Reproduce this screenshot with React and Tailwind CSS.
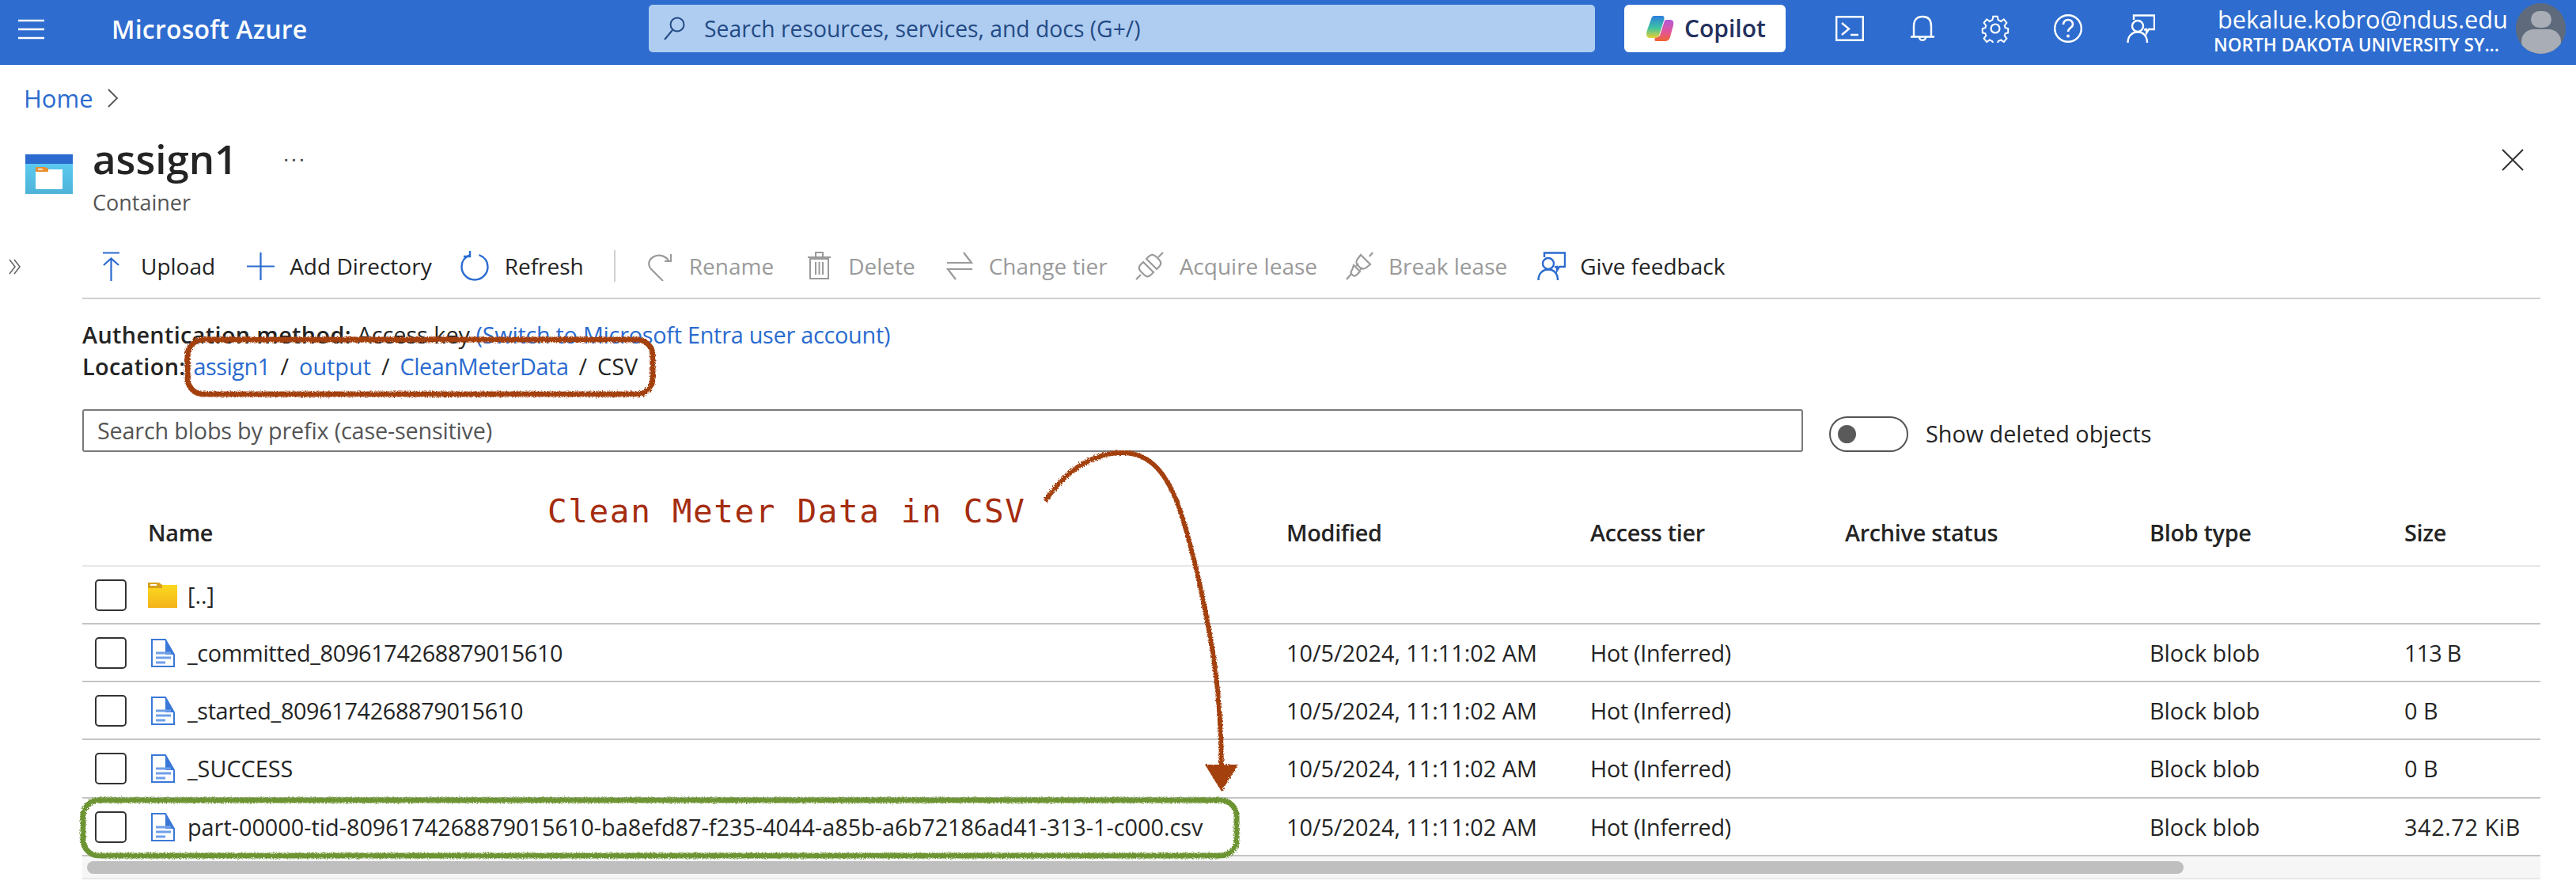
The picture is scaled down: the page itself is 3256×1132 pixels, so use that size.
import React from "react";

const Svg = ({ w, h, vb, children, cls = "" }) => (
  <svg width={w} height={h} viewBox={vb || `0 0 ${w} ${h}`} fill="none" className={`shrink-0 ${cls}`}>{children}</svg>
);

const Feedback = ({ c }) => (
  <Svg w={36} h={36}>
    <path d="M9 7V1.500h26V19h-7l-3 5v-5l-3 .5" stroke={c} strokeWidth="2.400" />
    <circle cx="14" cy="15" r="7" stroke={c} strokeWidth="2.400" />
    <path d="M1.500 36c0-8 5-13.500 12.500-13.500S26 28 26 36" stroke={c} strokeWidth="2.400" />
  </Svg>
);

const Plug = ({ flip }) => (
  <Svg w={36} h={36}>
    {flip ? (
      <g stroke="#9a9a9a" strokeWidth="2.200">
        <path d="M20 4l12 12-5 4a6 6 0 0 1-8 0l-3-3a6 6 0 0 1 0-8z" />
        <path d="M31 6l4-5" />
        <path d="M11 17l8 8-4 4c-2 2-4 2-6 0-2-2-2-4 0-6z" />
        <path d="M8 28l-6 7M14 18l3-3M19 23l3-3" />
      </g>
    ) : (
      <g stroke="#9a9a9a" strokeWidth="2.200">
        <path d="M14 9l13 13 3-3c3-3 3-6 0-9l-4-4c-3-3-6-3-9 0z" />
        <path d="M10 13l13 13-3 3c-3 3-6 3-9 0l-4-4c-3-3-3-6 0-9z" />
        <path d="M29 7l6-6M7 29l-6 6" />
      </g>
    )}
  </Svg>
);

const FileIcon = () => (
  <Svg w={30} h={36}>
    <path d="M1 1h17l11 19v15H1z" fill="#fff" stroke="#3a78d8" strokeWidth="2" />
    <path d="M18 1l11 19H18z" fill="#3a78d8" />
    <path d="M6 18h19M6 24h19M6 30h12" stroke="#6f9fe8" strokeWidth="3" />
  </Svg>
);

const Folder = () => (
  <Svg w={37} h={32}>
    <defs>
      <linearGradient id="fold" x1="0" y1="0" x2="0" y2="1">
        <stop offset="0" stopColor="#fbd91f" />
        <stop offset="1" stopColor="#f4b31a" />
      </linearGradient>
    </defs>
    <path d="M0 3h37v29H0z" fill="url(#fold)" />
    <path d="M0 0h14l4 3v4H0z" fill="#d7a11f" />
    <path d="M3 2h8v2H3z" fill="#fff" />
  </Svg>
);

const rows = [
  { name: "_committed_8096174268879015610", size: "113 B", h: "h-[73px]", nt: "tracking-[-0.33px]", st: "tracking-[-0.8px]" },
  { name: "_started_8096174268879015610", size: "0 B", h: "h-[73px]", nt: "tracking-[-0.35px]", st: "" },
  { name: "_SUCCESS", size: "0 B", h: "h-[74px]", nt: "", st: "" },
  { name: "part-00000-tid-8096174268879015610-ba8efd87-f235-4044-a85b-a6b72186ad41-313-1-c000.csv", size: "342.72 KiB", h: "h-[73px]", nt: "", st: "tracking-[0.6px]" },
];

const grid = "grid grid-cols-[83px_1439px_384px_322px_385px_322px_172px] items-center";

const Check = () => <div className="ml-4 w-10 h-10 rounded-[5px] border-2 border-[#333]" />;

const Tool = ({ icon, label, off, ml, gap }) => (
  <div className={`flex items-center ${ml} ${gap}`}>
    {icon}
    <span className={off ? "text-[#9a9a9a]" : "text-[#242424]"}>{label}</span>
  </div>
);

export default function App() {
  const D = "#9a9a9a";
  const B = "#2b6bcf";
  return (
    <div className="relative w-[3256px] h-[1132px] overflow-hidden bg-white font-['Open_Sans',sans-serif] text-[28.8px] leading-[40px] text-[#242424]">
      {/* top bar */}
      <header className="flex items-start h-[82px] bg-[#2e6dcf] text-white">
        <div className="flex items-center h-[74px] pl-[23px] w-[141px]">
          <Svg w={33} h={26}>
            <path d="M0 2h33M0 13h33M0 24h33" stroke="#fff" strokeWidth="2.400" />
          </Svg>
        </div>
        <div className="w-[679px] h-[74px] flex items-center text-[32px] font-semibold tracking-[0.2px]">Microsoft Azure</div>
        <div className="mt-[6px] w-[1196px] h-[60px] rounded-[5px] bg-[#afcdf0] flex items-center pl-[19px] gap-[24px] text-[#234a86] text-[28.300px]">
          <Svg w={27} h={30}>
            <circle cx="17" cy="10" r="8.500" stroke="#234a86" strokeWidth="2" />
            <path d="M11 17L1 29" stroke="#234a86" strokeWidth="2" />
          </Svg>
          Search resources, services, and docs (G+/)
        </div>
        <div className="ml-[37px] mt-[6px] w-[204px] h-[60px] rounded-[6px] bg-white flex items-center pl-[28px] gap-[13px] text-[#24305e] text-[30px] font-semibold">
          <Svg w={35} h={32}>
            <defs>
              <linearGradient id="cpA" x1="0" y1="0" x2="0" y2="1">
                <stop offset="0" stopColor="#2b7fe0" />
                <stop offset="0.55" stopColor="#3fc3a0" />
                <stop offset="1" stopColor="#e7d12f" />
              </linearGradient>
              <linearGradient id="cpB" x1="0" y1="0" x2="0" y2="1">
                <stop offset="0" stopColor="#b45bd8" />
                <stop offset="0.55" stopColor="#e0559a" />
                <stop offset="1" stopColor="#f0662f" />
              </linearGradient>
            </defs>
            <path d="M10 0h10c3 0 3 3 2 6l-6 19c-1 2-3 3-6 3H5C0 28-1 24 1 18L6 4c1-3 2-4 4-4z" fill="url(#cpA)" />
            <path d="M25 5h5c4 0 5 3 4 7l-4 15c-1 3-3 5-7 5H13c-3 0-3-2-2-4 4-1 6-2 7-6l4-13c1-3 1-4 3-4z" fill="url(#cpB)" />
          </Svg>
          Copilot
        </div>
        <div className="ml-[63px] flex items-center h-[72px] gap-[56px]">
          <Svg w={36} h={32}>
            <path d="M1.200 1.200h33.600v29.600H1.200z" stroke="#fff" strokeWidth="2.400" />
            <path d="M8 9l9 7.500-9 7.500M19 24h10" stroke="#fff" strokeWidth="2.400" />
          </Svg>
          <Svg w={36} h={34}>
            <path d="M7 27V14C7 6 11 2 18 2s11 4 11 12v13M3 27.500h30M14 28c0 5 8 5 8 0" stroke="#fff" strokeWidth="2.400" />
          </Svg>
          <Svg w={36} h={36}>
            <circle cx="18" cy="18" r="5.500" stroke="#fff" strokeWidth="2.200" />
            <path d="M15 1h6l1 5 4 2 4-3 4 5-3 4 1 3 4 1v6l-4 1-1 3 3 4-4 5-4-3-4 2-1 4h-6l-1-4-4-2-4 3-4-5 3-4-1-3-4-1v-6l4-1 1-3-3-4 4-5 4 3 4-2z" stroke="#fff" strokeWidth="2.200" transform="translate(1.800 1.800) scale(.9)" />
          </Svg>
          <Svg w={36} h={36}>
            <circle cx="18" cy="18" r="16.800" stroke="#fff" strokeWidth="2.400" />
            <path d="M12 13c0-4 3-6 6-6s6 2 6 6c0 4-6 4-6 9" stroke="#fff" strokeWidth="2.600" />
            <circle cx="18" cy="27.500" r="2" fill="#fff" />
          </Svg>
          <Feedback c="#fff" />
        </div>
        <div className="ml-[79px] w-[362px] pt-[4px] flex flex-col">
          <span className="text-[30.700px] leading-[40px] whitespace-nowrap">bekalue.kobro@ndus.edu</span>
          <span className="-ml-[5px] text-[22.600px] leading-[26px] font-semibold whitespace-nowrap">NORTH DAKOTA UNIVERSITY SY...</span>
        </div>
        <div className="ml-[15px] mt-[4px] w-[63px] h-[64px] rounded-full bg-[#5f6b7c] overflow-hidden flex flex-col items-center">
          <div className="mt-[10px] w-[26px] h-[28px] rounded-full bg-[#a9adb5]" />
          <div className="mt-[2px] w-[50px] h-[40px] rounded-full bg-[#a9adb5]" />
        </div>
      </header>

      {/* breadcrumb */}
      <nav className="h-[83px] pl-[30px] flex items-center gap-[18px] text-[31px] text-[#2b6bcf]">
        <span>Home</span>
        <Svg w={14} h={24}>
          <path d="M1 1l11 11L1 23" stroke="#555" strokeWidth="1.800" />
        </Svg>
      </nav>

      {/* title */}
      <section className="h-[120px] flex items-start pl-[32px]">
        <Svg w={60} h={50} cls="mt-[30px]">
          <defs>
            <linearGradient id="cont" x1="0" y1="0" x2="0" y2="1">
              <stop offset="0" stopColor="#5ed0f7" />
              <stop offset="1" stopColor="#4fb3d8" />
            </linearGradient>
          </defs>
          <path d="M0 0h60v50H0z" fill="url(#cont)" />
          <path d="M0 0h60v12H0z" fill="#2b6bcf" />
          <path d="M13 19h34v25H13z" fill="#fff" />
          <path d="M13 16h12l4 2v4H13z" fill="#ea8f2e" />
          <path d="M16 18h6v1.500h-6z" fill="#fff" />
        </Svg>
        <div className="ml-[25px] flex flex-col">
          <h1 className="text-[51px] leading-[70px] font-semibold">assign1</h1>
          <span className="mt-[1px] text-[27px] leading-[40px] text-[#555]">Container</span>
        </div>
        <div className="ml-[58px] mt-[14px] text-[26px] leading-[30px] tracking-[3px] text-[#444]">...</div>
        <div className="ml-auto mr-[66px] mt-[23px]">
          <Svg w={28} h={28}>
            <path d="M1 1l26 26M27 1L1 27" stroke="#333" strokeWidth="2" />
          </Svg>
        </div>
      </section>

      {/* toolbar */}
      <div className="flex h-[93px]">
        <div className="w-[104px] pl-[10px] pt-[11px] flex items-center">
          <Svg w={17} h={20}>
            <path d="M2 1l7 9-7 9M8 1l7 9-7 9" stroke="#666" strokeWidth="1.600" />
          </Svg>
        </div>
        <div className="w-[3107px] pt-[11px] flex items-center border-b-2 border-[#d0d0d0] text-[28px]">
          <Tool ml="ml-[25px]" gap="gap-[26px]" label="Upload" icon={
            <Svg w={23} h={37}><path d="M1 1.500h21M11.500 37V9M2 17l9.500-8.500L21 17" stroke={B} strokeWidth="2.200" /></Svg>
          } />
          <Tool ml="ml-[40px]" gap="gap-[19px]" label="Add Directory" icon={
            <Svg w={35} h={35}><path d="M17.500 0v35M0 17.500h35" stroke={B} strokeWidth="2.200" /></Svg>
          } />
          <Tool ml="ml-[36px]" gap="gap-[20px]" label="Refresh" icon={
            <Svg w={36} h={38}><path d="M12 5C5 8 1.500 14 1.500 20a16.500 16.500 0 1 0 33 0c0-7-4-12-11-15" stroke={B} strokeWidth="2.400" /><path d="M12 0v7H4" stroke={B} strokeWidth="2.400" /></Svg>
          } />
          <div className="ml-[38px] w-[2px] h-[40px] bg-[#d0d0d0]" />
          <Tool ml="ml-[41px]" gap="gap-[22px]" off label="Rename" icon={
            <Svg w={30} h={37}><path d="M26 11C21 4 12 3 6 7 0 11 0 18 4 22l15 15M21 12h8V3" stroke={D} strokeWidth="2.200" /></Svg>
          } />
          <Tool ml="ml-[43px]" gap="gap-[22px]" off label="Delete" icon={
            <Svg w={29} h={36}><path d="M3 9h23v25H3zM0 7h29M10 7V1h9v6M10 13v16M14.500 13v16M19 13v16" stroke={D} strokeWidth="2" /></Svg>
          } />
          <Tool ml="ml-[39px]" gap="gap-[20px]" off label="Change tier" icon={
            <Svg w={34} h={36}><path d="M1 14h31L22 1M33 22H2l10 13" stroke={D} strokeWidth="2.200" /></Svg>
          } />
          <Tool ml="ml-[35px]" gap="gap-[20px]" off label="Acquire lease" icon={<Plug />} />
          <Tool ml="ml-[35px]" gap="gap-[19px]" off label="Break lease" icon={<Plug flip />} />
          <Tool ml="ml-[38px]" gap="gap-[18px]" label="Give feedback" icon={<Feedback c={B} />} />
        </div>
      </div>

      {/* auth + location */}
      <section className="ml-[104px] pt-[25px]">
        <div className="whitespace-nowrap">
          <b className="font-semibold tracking-[0.35px]">Authentication method:</b> Access key <span className="text-[#2b6bcf] tracking-[-0.25px]">(Switch to Microsoft Entra user account)</span>
        </div>
        <div className="flex gap-[10px] whitespace-nowrap">
          <b className="font-semibold tracking-[0.35px]">Location:</b>
          <div className="flex gap-[13px]">
            <span className="text-[#2b6bcf] tracking-[-0.5px]">assign1</span><span>/</span>
            <span className="text-[#2b6bcf]">output</span><span>/</span>
            <span className="text-[#2b6bcf] tracking-[-0.4px]">CleanMeterData</span><span>/</span>
            <span>CSV</span>
          </div>
        </div>
      </section>

      {/* filter */}
      <section className="ml-[104px] mt-[34px] flex items-center h-[54px]">
        <div className="w-[2175px] h-[54px] rounded-[3px] border-2 border-[#7a7a7a] flex items-center pl-[17px] text-[#555] tracking-[-0.2px]">
          Search blobs by prefix (case-sensitive)
        </div>
        <div className="ml-[33px] mt-[8px] w-[100px] h-[45px] rounded-full border-2 border-[#555] flex items-center pl-[9px]">
          <div className="w-[23px] h-[23px] rounded-full bg-[#5a5a5a]" />
        </div>
        <span className="ml-[22px] mt-[8px]">Show deleted objects</span>
      </section>

      {/* table */}
      <section className="ml-[104px] w-[3107px]">
        <div className={`${grid} h-[145px] pt-[60px] border-b-2 border-[#e8e8e8] font-semibold tracking-[-0.3px]`}>
          <span />
          <span>Name</span>
          <span>Modified</span>
          <span>Access tier</span>
          <span>Archive status</span>
          <span>Blob type</span>
          <span>Size</span>
        </div>
        <div className={`${grid} h-[73px] border-b-2 border-[#c4c4c4]`}>
          <Check />
          <div className="flex items-center gap-[13px]"><Folder /><span>[..]</span></div>
        </div>
        {rows.map((r) => (
          <div key={r.name} className={`${grid} ${r.h} border-b-2 border-[#c4c4c4]`}>
            <Check />
            <div className="flex items-center gap-[16px] pl-[4px] whitespace-nowrap"><FileIcon /><span className={r.nt}>{r.name}</span></div>
            <span>10/5/2024, 11:11:02 AM</span>
            <span className="tracking-[-0.3px]">Hot (Inferred)</span>
            <span />
            <span>Block blob</span>
            <span className={r.st}>{r.size}</span>
          </div>
        ))}
        <div className="h-[29px] bg-[#f6f6f6] border-b-2 border-[#e8e8e8] flex items-center pl-[6px]">
          <div className="w-[2650px] h-[16px] rounded-full bg-[#bfbfbf]" />
        </div>
      </section>

      {/* hand-drawn annotations laid over the page */}
      <span className="absolute left-[692px] top-[620px] font-['DejaVu_Sans_Mono',monospace] text-[41px] leading-[52px] tracking-[1.600px] text-[#a52d10] whitespace-nowrap">
        Clean Meter Data in CSV
      </span>
      <svg width="3256" height="1132" viewBox="0 0 3256 1132" fill="none" className="absolute left-0 top-0 pointer-events-none">
        <defs>
          <filter id="rough" x="-5%" y="-5%" width="110%" height="110%">
            <feTurbulence type="fractalNoise" baseFrequency="0.6" numOctaves="2" seed="4" />
            <feDisplacementMap in="SourceGraphic" scale="5" />
          </filter>
        </defs>
        <g filter="url(#rough)">
          <rect x="237" y="429" width="588" height="69" rx="20" stroke="#a3410f" strokeWidth="7" />
          <rect x="105" y="1011" width="1458" height="70" rx="20" stroke="#6c9433" strokeWidth="7" />
          <path d="M1321 633C1350 590 1385 572 1419 572C1455 572 1475 600 1490 640C1510 700 1524 770 1534 830C1541 880 1544 920 1544 975" stroke="#a3410f" strokeWidth="6" />
          <path d="M1523 966L1565 966L1544 1000Z" fill="#a3410f" />
        </g>
      </svg>
    </div>
  );
}
